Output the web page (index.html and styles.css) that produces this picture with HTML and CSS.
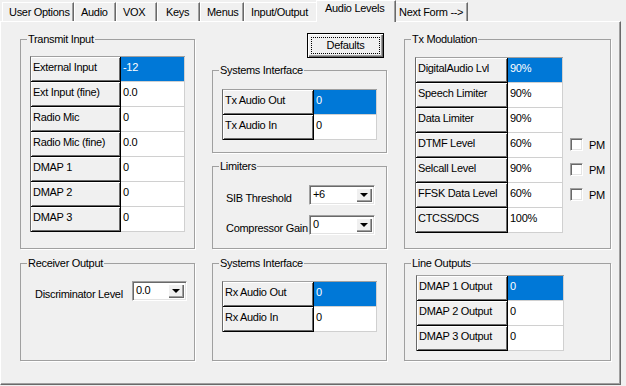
FILE: index.html
```html
<!DOCTYPE html>
<html>
<head>
<meta charset="utf-8">
<link rel="stylesheet" href="styles.css">
</head>
<body>
<div class="tabs">
  <div class="tab t1">User Options</div>
  <div class="tab t2">Audio</div>
  <div class="tab t3">VOX</div>
  <div class="tab t4">Keys</div>
  <div class="tab t5">Menus</div>
  <div class="tab t6">Input/Output</div>
  <div class="tab t7 active">Audio Levels</div>
  <div class="tab t8">Next Form --&gt;</div>
</div>
<div class="page">
  <div class="col c1">
    <fieldset class="group h-tall">
      <legend>Transmit Input</legend>
      <div class="body b-tx">
        <div class="grid g-a">
          <div class="hd">External Input</div><div class="val sel">-12</div>
          <div class="hd">Ext Input (fine)</div><div class="val">0.0</div>
          <div class="hd">Radio Mic</div><div class="val">0</div>
          <div class="hd">Radio Mic (fine)</div><div class="val">0.0</div>
          <div class="hd">DMAP 1</div><div class="val">0</div>
          <div class="hd">DMAP 2</div><div class="val">0</div>
          <div class="hd">DMAP 3</div><div class="val">0</div>
        </div>
      </div>
    </fieldset>
    <fieldset class="group h-low gap-top">
      <legend>Receiver Output</legend>
      <div class="body b-rx">
        <div class="field">
          <span class="flabel w-disc">Discriminator Level</span>
          <div class="combo cw-s"><span class="combo-val">0.0</span><span class="combo-btn"><span class="tri"></span></span></div>
        </div>
      </div>
    </fieldset>
  </div>

  <div class="col c2">
    <div class="btn-row">
      <button class="btn"><span class="focus">Defaults</span></button>
    </div>
    <fieldset class="group h-mid sys-top">
      <legend>Systems Interface</legend>
      <div class="body b-sys">
        <div class="grid g-b">
          <div class="hd">Tx Audio Out</div><div class="val sel">0</div>
          <div class="hd">Tx Audio In</div><div class="val">0</div>
        </div>
      </div>
    </fieldset>
    <fieldset class="group h-mid lim-top">
      <legend>Limiters</legend>
      <div class="body b-lim">
        <div class="field">
          <span class="flabel w-lim">SIB Threshold</span>
          <div class="combo cw-m"><span class="combo-val">+6</span><span class="combo-btn"><span class="tri"></span></span></div>
        </div>
        <div class="field f2">
          <span class="flabel w-lim">Compressor Gain</span>
          <div class="combo cw-m"><span class="combo-val">0</span><span class="combo-btn"><span class="tri"></span></span></div>
        </div>
      </div>
    </fieldset>
    <fieldset class="group h-low gap-top">
      <legend>Systems Interface</legend>
      <div class="body b-rxs">
        <div class="grid g-b">
          <div class="hd">Rx Audio Out</div><div class="val sel">0</div>
          <div class="hd">Rx Audio In</div><div class="val">0</div>
        </div>
      </div>
    </fieldset>
  </div>

  <div class="col c3">
    <fieldset class="group h-tall">
      <legend>Tx Modulation</legend>
      <div class="body b-mod">
        <div class="grid g-c">
          <div class="hd">DigitalAudio Lvl</div><div class="val sel">90%</div>
          <div class="hd">Speech Limiter</div><div class="val">90%</div>
          <div class="hd">Data Limiter</div><div class="val">90%</div>
          <div class="hd">DTMF Level</div><div class="val">60%</div>
          <div class="hd">Selcall Level</div><div class="val">90%</div>
          <div class="hd">FFSK Data Level</div><div class="val">60%</div>
          <div class="hd">CTCSS/DCS</div><div class="val">100%</div>
        </div>
        <div class="checks">
          <div class="crow"></div>
          <div class="crow"></div>
          <div class="crow"></div>
          <div class="crow"><span class="cb"></span><span>PM</span></div>
          <div class="crow"><span class="cb"></span><span>PM</span></div>
          <div class="crow"><span class="cb"></span><span>PM</span></div>
        </div>
      </div>
    </fieldset>
    <fieldset class="group h-low gap-top">
      <legend>Line Outputs</legend>
      <div class="body b-line">
        <div class="grid g-d">
          <div class="hd">DMAP 1 Output</div><div class="val sel">0</div>
          <div class="hd">DMAP 2 Output</div><div class="val">0</div>
          <div class="hd">DMAP 3 Output</div><div class="val">0</div>
        </div>
      </div>
    </fieldset>
  </div>
</div>
</body>
</html>
```

FILE: styles.css
```css
* { box-sizing: border-box; }
html, body { margin: 0; padding: 0; }
body {
  width: 626px;
  height: 386px;
  overflow: hidden;
  background: #f0f0f0;
  font-family: "Liberation Sans", Arial, sans-serif;
  font-size: 11px;
  letter-spacing: -0.3px;
  color: #000;
}

/* Tabs */
.tabs {
  display: flex;
  align-items: flex-end;
  height: 21px;
  padding-left: 2px;
}
.tab {
  height: 19px;
  padding: 3px 0 0 6px;
  line-height: 13px;
  white-space: nowrap;
  border-top: 1px solid #fff;
  border-left: 1px solid #fff;
  border-right: 1px solid #696969;
  box-shadow: inset -1px 0 #a0a0a0;
  background: #f0f0f0;
}
.t1 { width: 72px; }
.t2 { width: 42px; }
.t3 { width: 41px; }
.t4 { width: 43px; padding-left: 8px; }
.t5 { width: 44px; }
.t6 { width: 74px; }
.t7 { width: 76px; }
.t8 { width: 74px; padding-left: 4px; }
.tab.active {
  height: 22px;
  margin: 0 -2px -1px -2px;
  padding: 1px 0 0 8px;
  position: relative;
  z-index: 1;
  width: 80px;
}

/* Page */
.page {
  display: flex;
  width: 621px;
  height: 364px;
  border-top: 1px solid #fff;
  border-left: 1px solid #fff;
  border-right: 1px solid #696969;
  border-bottom: 1px solid #696969;
  box-shadow: inset -1px -1px #a0a0a0;
  padding: 11px 0 0 19px;
}
.col { display: flex; flex-direction: column; }
.c1 { width: 175px; }
.c2 { width: 175px; margin-left: 17px; }
.c3 { width: 207px; margin-left: 17px; }

/* Group boxes */
.group {
  margin: 0;
  padding: 0;
  min-width: 0;
  border: 1px solid #a0a0a0;
  box-shadow: 1px 1px 0 #fff;
}
.group legend {
  margin-left: 6px;
  padding: 0 1px;
  line-height: 13px;
  font-size: 11px;
}
.h-tall { height: 216px; }
.h-mid { height: 89px; }
.h-low { height: 104px; }
.gap-top { margin-top: 8px; }
.sys-top { margin-top: 6px; }
.lim-top { margin-top: 7px; }

.body { display: flex; flex-direction: column; }
.b-tx { padding: 10px 0 0 9px; }
.b-mod { flex-direction: row; padding: 11px 0 0 10px; }
.b-sys { padding: 12px 0 0 9px; }
.b-rxs { padding: 11px 0 0 9px; }
.b-line { padding: 5px 0 0 11px; }
.b-lim { padding: 12px 0 0 13px; }
.b-rx { padding: 11px 0 0 14px; }

/* Grids */
.grid {
  display: grid;
  grid-auto-rows: 25px;
  border-left: 1px solid #696969;
  border-top: 1px solid #a0a0a0;
  align-self: flex-start;
}
.g-a { grid-template-columns: 90px 64px; }
.g-b { grid-template-columns: 91px 63px; }
.g-c { grid-template-columns: 92px 55px; }
.g-d { grid-template-columns: 91px 56px; }
.hd {
  background: #f0f0f0;
  border-right: 1px solid #000;
  border-bottom: 1px solid #000;
  box-shadow: inset 1px 1px #fff, inset -1px -1px #696969;
  padding: 4px 0 0 2px;
  line-height: 13px;
  white-space: nowrap;
  overflow: hidden;
}
.val {
  background: #fff;
  border-right: 1px solid #d0d0d0;
  border-bottom: 1px solid #d0d0d0;
  padding: 4px 0 0 2px;
  line-height: 13px;
}
.val.sel { background: #0078d7; color: #fff; }

/* Checkboxes */
.checks { display: flex; flex-direction: column; margin-left: 7px; padding-top: 1px; }
.crow { height: 25px; display: flex; align-items: center; gap: 6px; padding-bottom: 2px; }
.cb {
  width: 13px;
  height: 13px;
  background: #fff;
  border: 1px solid;
  border-color: #a0a0a0 #fff #fff #a0a0a0;
  box-shadow: inset 1px 1px #696969, inset -1px -1px #e3e3e3;
}

/* Fields and combos */
.field { display: flex; align-items: flex-start; }
.f2 { margin-top: 10px; }
.flabel { padding-top: 7px; line-height: 13px; white-space: nowrap; }
.w-lim { width: 83px; }
.w-disc { width: 97px; }
.combo {
  display: flex;
  height: 20px;
  background: #fff;
  border: 1px solid;
  border-color: #a0a0a0 #fff #fff #a0a0a0;
  box-shadow: inset 1px 1px #696969, inset -1px -1px #e3e3e3;
  padding: 2px;
}
.cw-m { width: 66px; }
.cw-s { width: 55px; }
.combo-val { flex: 1; padding-left: 1px; line-height: 13px; }
.combo-btn {
  width: 16px;
  display: flex;
  align-items: center;
  justify-content: center;
  background: #f0f0f0;
  box-shadow: inset 1px 1px #fff, inset -1px -1px #696969, inset -2px -2px #a0a0a0;
}
.tri {
  width: 0;
  height: 0;
  border-left: 4px solid transparent;
  border-right: 4px solid transparent;
  border-top: 4px solid #000;
  margin-left: -1px;
}

/* Button */
.btn-row { display: flex; justify-content: flex-end; padding-right: 3px; }
.btn {
  width: 77px;
  height: 25px;
  padding: 3px;
  margin: 0;
  font: inherit;
  letter-spacing: inherit;
  color: #000;
  background: #f0f0f0;
  border: 1px solid #000;
  box-shadow: inset 1px 1px #fff, inset -1px -1px #696969, inset -2px -2px #a0a0a0;
  display: flex;
}
.focus {
  flex: 1;
  border: 1px dotted #000;
  display: flex;
  align-items: center;
  justify-content: center;
  line-height: 13px;
}
```
